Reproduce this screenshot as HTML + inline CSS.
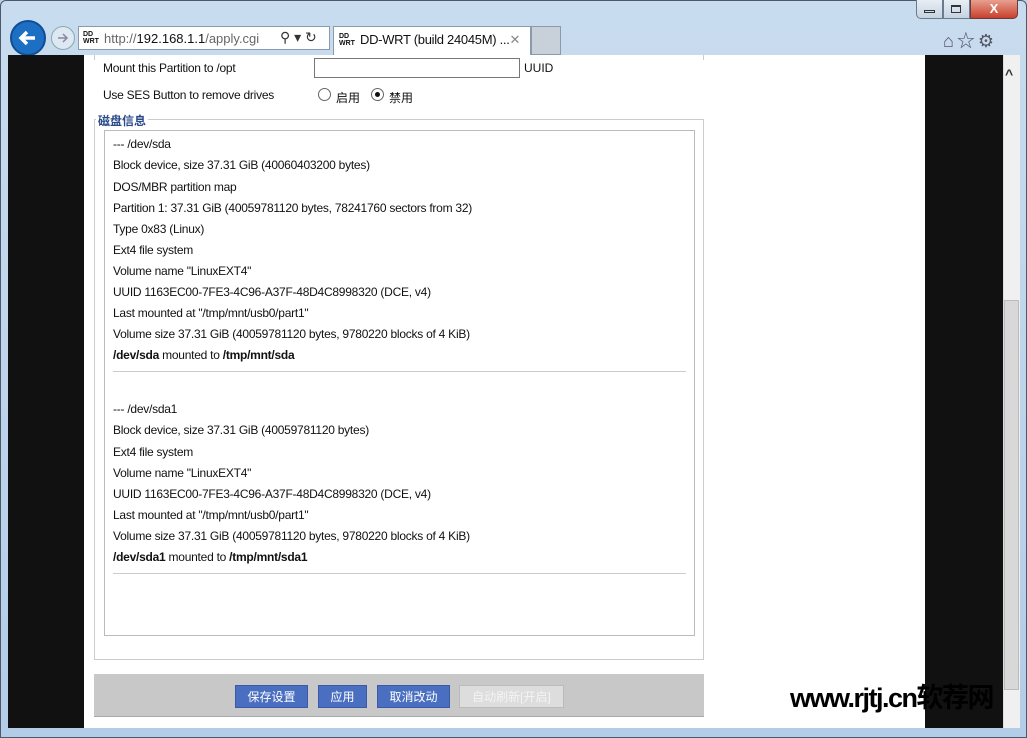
<!DOCTYPE html>
<html><head><meta charset="utf-8"><style>
*{margin:0;padding:0;box-sizing:border-box}
body{width:1027px;height:738px;position:relative;overflow:hidden;background:#b9d1ea;font-family:"Liberation Sans","Noto Sans CJK SC",sans-serif;font-size:12px;color:#111}
.a{position:absolute}
.t{position:absolute;left:113px;white-space:nowrap;letter-spacing:-0.25px}
.btn{position:absolute;top:685px;height:23px;background:#4a6fc0;color:#fff;font-size:12px;text-align:center;line-height:23px;border:1px solid #3a5aa8}
</style></head><body>
<div class="a" style="left:0;top:0;width:1027px;height:738px;border:1px solid #4a5a6a;border-radius:6px 6px 0 0;background:linear-gradient(#c9dcef,#b3cde8)"></div>
<div class="a" style="left:916px;top:0;width:27px;height:19px;background:linear-gradient(#e8eef5,#c5d3e2);border:1px solid #6b7b8b;border-top:none;border-radius:0 0 0 5px"></div>
<div class="a" style="left:924px;top:10px;width:11px;height:3px;border:1px solid #333"></div>
<div class="a" style="left:943px;top:0;width:27px;height:19px;background:linear-gradient(#e8eef5,#c5d3e2);border:1px solid #6b7b8b;border-top:none"></div>
<div class="a" style="left:951px;top:5px;width:10px;height:8px;border:1px solid #333;border-top-width:2px"></div>
<div class="a" style="left:970px;top:0;width:48px;height:19px;background:linear-gradient(#e8a090,#c8402c);border:1px solid #6b3b3b;border-top:none;border-radius:0 0 5px 0;color:#fff;text-align:center;font-weight:bold;font-size:13px;line-height:17px">X</div>
<div class="a" style="left:10px;top:20px;width:36px;height:36px;border-radius:50%;background:#1d6fc4;border:2px solid #0f4e94"></div>
<svg class="a" style="left:16px;top:26px" width="24" height="24"><path d="M19 12H6M11 6l-6 6 6 6" stroke="#fff" stroke-width="3.5" fill="none"/></svg>
<div class="a" style="left:51px;top:26px;width:24px;height:24px;border-radius:50%;border:1px solid #8aa;background:#dde8f3"></div>
<svg class="a" style="left:55px;top:30px" width="16" height="16"><path d="M3 8h9M8 4l4 4-4 4" stroke="#889" stroke-width="1.5" fill="none"/></svg>
<div class="a" style="left:78px;top:26px;width:252px;height:24px;background:#fff;border:1px solid #8a9aaa"></div>
<div class="a" style="left:83px;top:31px;font-size:7px;font-weight:bold;line-height:7px">DD<br>WRT</div>
<div class="a" style="left:104px;top:31px;font-size:13px;color:#666">http://<span style="color:#111">192.168.1.1</span>/apply.cgi</div>
<div class="a" style="left:280px;top:29px;font-size:14px;color:#333">⚲ ▾ ↻</div>
<div class="a" style="left:333px;top:26px;width:198px;height:30px;background:#fff;border:1px solid #8a9aaa;border-bottom:none"></div>
<div class="a" style="left:339px;top:33px;font-size:7px;font-weight:bold;line-height:7px">DD<br>WRT</div>
<div class="a" style="left:360px;top:32px;font-size:13px;letter-spacing:-0.3px">DD-WRT (build 24045M) ...<span style="color:#888">✕</span></div>
<div class="a" style="left:531px;top:26px;width:30px;height:29px;background:#c8d0da;border:1px solid #8a9aaa"></div>
<div class="a" style="left:943px;top:27px;font-size:18px;color:#556;letter-spacing:3px">⌂☆⚙</div>
<div class="a" style="left:8px;top:55px;width:1012px;height:673px;background:#111"></div>
<div class="a" style="left:84px;top:55px;width:841px;height:673px;background:#fff"></div>
<div class="a" style="left:703px;top:55px;width:1px;height:5px;background:#ccc"></div>
<div class="a" style="left:1003px;top:55px;width:17px;height:673px;background:#f0f0f0;border-left:1px solid #ddd"></div>
<div class="a" style="left:1004px;top:300px;width:15px;height:390px;background:#d8d8d8;border:1px solid #bbb"></div>
<div class="a" style="left:1005px;top:66px;font-size:14px;font-weight:bold;color:#333">^</div>
<div class="a" style="left:94px;top:55px;width:1px;height:5px;background:#ccc"></div>
<div class="t" style="left:103px;top:61px">Mount this Partition to /opt</div>
<div class="a" style="left:314px;top:58px;width:206px;height:20px;border:1px solid #777"></div>
<div class="a" style="left:524px;top:61px">UUID</div>
<div class="t" style="left:103px;top:88px">Use SES Button to remove drives</div>
<div class="a" style="left:318px;top:88px;width:13px;height:13px;border-radius:50%;border:1px solid #666"></div>
<div class="a" style="left:336px;top:89px">启用</div>
<div class="a" style="left:371px;top:88px;width:13px;height:13px;border-radius:50%;border:1px solid #666"></div>
<div class="a" style="left:375px;top:92px;width:5px;height:5px;border-radius:50%;background:#111"></div>
<div class="a" style="left:389px;top:89px">禁用</div>
<div class="a" style="left:94px;top:119px;width:610px;height:541px;border:1px solid #ccc"></div>
<div class="a" style="left:96px;top:112px;background:#fff;padding:0 2px;color:#2a4a8a;font-weight:bold">磁盘信息</div>
<div class="a" style="left:104px;top:130px;width:591px;height:506px;border:1px solid #bbb"></div>
<div class="t" style="top:137px">--- /dev/sda</div>
<div class="t" style="top:158px">Block device, size 37.31 GiB (40060403200 bytes)</div>
<div class="t" style="top:180px">DOS/MBR partition map</div>
<div class="t" style="top:201px">Partition 1: 37.31 GiB (40059781120 bytes, 78241760 sectors from 32)</div>
<div class="t" style="top:222px">Type 0x83 (Linux)</div>
<div class="t" style="top:243px">Ext4 file system</div>
<div class="t" style="top:264px">Volume name "LinuxEXT4"</div>
<div class="t" style="top:285px">UUID 1163EC00-7FE3-4C96-A37F-48D4C8998320 (DCE, v4)</div>
<div class="t" style="top:306px">Last mounted at "/tmp/mnt/usb0/part1"</div>
<div class="t" style="top:327px">Volume size 37.31 GiB (40059781120 bytes, 9780220 blocks of 4 KiB)</div>
<div class="t" style="top:348px"><b>/dev/sda</b> mounted to <b>/tmp/mnt/sda</b></div>
<div class="a" style="left:113px;top:371px;width:573px;height:1px;background:#ccc"></div>
<div class="t" style="top:402px">--- /dev/sda1</div>
<div class="t" style="top:423px">Block device, size 37.31 GiB (40059781120 bytes)</div>
<div class="t" style="top:445px">Ext4 file system</div>
<div class="t" style="top:466px">Volume name "LinuxEXT4"</div>
<div class="t" style="top:487px">UUID 1163EC00-7FE3-4C96-A37F-48D4C8998320 (DCE, v4)</div>
<div class="t" style="top:508px">Last mounted at "/tmp/mnt/usb0/part1"</div>
<div class="t" style="top:529px">Volume size 37.31 GiB (40059781120 bytes, 9780220 blocks of 4 KiB)</div>
<div class="t" style="top:550px"><b>/dev/sda1</b> mounted to <b>/tmp/mnt/sda1</b></div>
<div class="a" style="left:113px;top:573px;width:573px;height:1px;background:#ccc"></div>
<div class="a" style="left:94px;top:674px;width:610px;height:43px;background:#c8c8c8;border-bottom:1px solid #aaa"></div>
<div class="btn" style="left:235px;width:73px">保存设置</div>
<div class="btn" style="left:318px;width:49px">应用</div>
<div class="btn" style="left:377px;width:73px">取消改动</div>
<div class="btn" style="left:459px;width:105px;background:#ddd;border-color:#bbb;color:#f4f4f4">自动刷新[开启]</div>
<div class="a" style="left:790px;top:676px;font-size:27px;font-weight:bold;color:#000;letter-spacing:-1.5px;white-space:nowrap;z-index:5">www.rjtj.cn软荐网</div>
</body></html>
